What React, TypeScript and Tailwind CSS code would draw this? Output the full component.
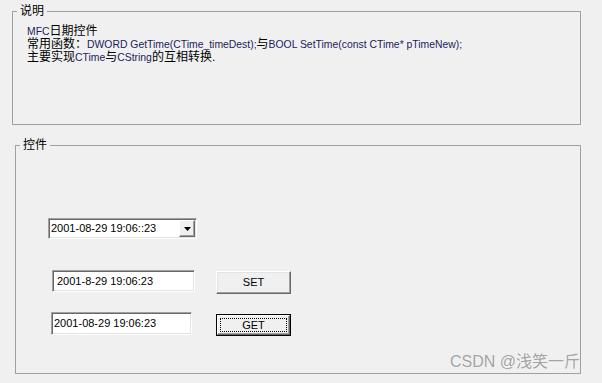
const sans = "font-['Liberation_Sans','Noto_Sans_CJK_SC',sans-serif]";

function Latin({ children }: { children: React.ReactNode }) {
  return <span className="text-[10.4px] text-[#1c1c5c]">{children}</span>;
}

function Edit({ text, className }: { text: string; className: string }) {
  return (
    <div
      className={`flex items-center bg-white pl-[2px] text-[11px] text-black border border-t-[#a0a0a0] border-l-[#a0a0a0] border-r-white border-b-white shadow-[inset_1px_1px_0_#696969,inset_-1px_-1px_0_#e3e3e3] ${className}`}
    >
      {text}
    </div>
  );
}

function Button({ label, isDefault, className }: { label: string; isDefault?: boolean; className: string }) {
  if (isDefault) {
    return (
      <div className={`relative border border-black ${className}`}>
        <div className="flex h-full w-full items-center justify-center bg-[#f0f0f0] text-[11px] text-black border border-t-white border-l-white border-r-[#696969] border-b-[#696969] shadow-[inset_-1px_-1px_0_#a0a0a0]">
          {label}
        </div>
        <div className="absolute inset-[3px] border border-dotted border-black" />
      </div>
    );
  }
  return (
    <div
      className={`flex items-center justify-center bg-[#f0f0f0] text-[11px] text-black border border-t-white border-l-white border-r-[#696969] border-b-[#696969] shadow-[inset_-1px_-1px_0_#a0a0a0,inset_1px_1px_0_#e3e3e3] ${className}`}
    >
      {label}
    </div>
  );
}

export default function App() {
  return (
    <div className={`relative h-[383px] w-[602px] overflow-hidden bg-[#f0f0f0] ${sans}`}>
      <fieldset className="ml-[12px] mt-[4px] h-[121px] w-[569px] border border-[#a0a0a0]">
        <legend className="ml-[4px] px-[3px] text-[12px] leading-[14px] text-black">说明</legend>
        <div className="pl-[14px] pt-[7px] text-[12px] leading-[13px] text-black">
          <p>
            <Latin>MFC</Latin>日期控件
          </p>
          <p>
            常用函数：<Latin>DWORD GetTime(CTime_timeDest);</Latin>与<Latin>BOOL SetTime(const CTime* pTimeNew);</Latin>
          </p>
          <p>
            主要实现<Latin>CTime</Latin>与<Latin>CString</Latin>的互相转换.
          </p>
        </div>
      </fieldset>

      <fieldset className="ml-[15px] mt-[13px] h-[236px] w-[566px] border border-[#a0a0a0]">
        <legend className="ml-[4px] px-[3px] text-[12px] leading-[14px] text-black">控件</legend>

        <div className="ml-[32px] mt-[66px] flex h-[21px] w-[149px] items-center bg-white text-[11px] text-black border border-t-[#a0a0a0] border-l-[#a0a0a0] border-r-white border-b-white shadow-[inset_1px_1px_0_#696969,inset_-1px_-1px_0_#e3e3e3]">
          <span className="flex-1 pl-[2px]">2001-08-29 19:06::23</span>
          <div className="mr-[1px] flex h-[17px] w-[16px] items-center justify-center bg-[#f0f0f0] border border-t-white border-l-white border-r-[#696969] border-b-[#696969] shadow-[inset_-1px_-1px_0_#a0a0a0]">
            <svg width="7" height="4" viewBox="0 0 7 4">
              <polygon points="0,0 7,0 3.5,4" fill="#000" />
            </svg>
          </div>
        </div>

        <div className="mt-[31px] flex items-start">
          <Edit text="2001-8-29 19:06:23" className="ml-[36px] h-[22px] w-[143px] pl-[4px]" />
          <Button label="SET" className="ml-[21px] mt-[1px] h-[23px] w-[75px]" />
        </div>

        <div className="mt-[18px] flex items-start">
          <Edit text="2001-08-29 19:06:23" className="ml-[35px] h-[23px] w-[141px]" />
          <Button label="GET" isDefault className="ml-[24px] mt-[2px] h-[22px] w-[75px]" />
        </div>
      </fieldset>

      <div className="absolute left-[450px] top-[352px] text-[16px] leading-[20px] text-[#a3a3a3] [text-shadow:0_0_1px_#fff]">
        CSDN @浅笑一斤
      </div>
    </div>
  );
}
